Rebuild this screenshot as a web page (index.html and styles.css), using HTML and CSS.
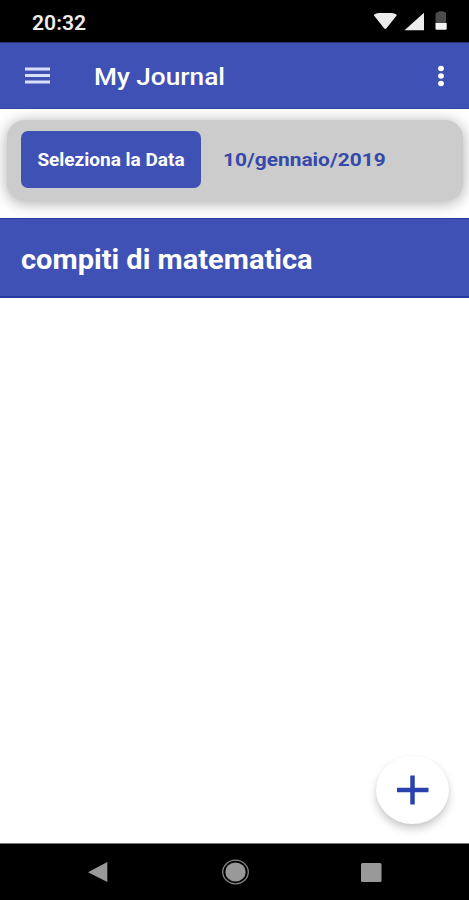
FILE: index.html
```html
<!DOCTYPE html>
<html lang="it">
<head>
<meta charset="utf-8">
<title>My Journal</title>
<link rel="stylesheet" href="styles.css">
</head>
<body>
<div class="screen">
  <div class="status-bar">
    <span class="clock">20:32</span>
    <svg class="status-icons" width="76" height="22" viewBox="0 0 76 22">
      <path d="M0.800 5.200Q2 3 6 2.900H18.500Q22.500 3 23.800 5.200L13.500 18.300Q12.300 19.700 11.100 18.300Z" fill="#ececec"/>
      <path d="M51 2.700V20.300H31.500Z" fill="#ececec"/>
      <path d="M63.500 2.800L66.500 1.300H70L73 2.800V13H62.500V3.800Z" fill="#4b4b4b"/>
      <path d="M62.500 13H73.700V18.500Q73.700 19.700 72.500 19.700H63.700Q62.500 19.700 62.500 18.500Z" fill="#f5f5f5"/>
    </svg>
  </div>
  <header class="app-bar">
    <svg class="menu-icon" width="25" height="17" viewBox="0 0 25 17">
      <path d="M0 2H25M0 8.500H25M0 15H25" stroke="#d9e0fa" stroke-width="2.800"/>
    </svg>
    <h1 class="title">My Journal</h1>
    <svg class="more-icon" width="7" height="22" viewBox="0 0 7 22">
      <g fill="#fff"><ellipse cx="3" cy="3.500" rx="2.900" ry="2.700"/><ellipse cx="3" cy="11" rx="2.900" ry="2.700"/><ellipse cx="3" cy="18.500" rx="2.900" ry="2.700"/></g>
    </svg>
  </header>
  <main class="content">
    <section class="date-area">
      <div class="date-card">
        <button class="date-button"><span class="button-label">Seleziona la Data</span></button>
        <span class="date">10/gennaio/2019</span>
      </div>
    </section>
    <div class="entry"><span class="entry-text">compiti di matematica</span></div>
    <button class="fab" aria-label="Aggiungi">
      <svg width="32" height="30" viewBox="0 0 32 30"><path d="M0 15H31.500M15.500 0.500V29.500" stroke="#2a41ae" stroke-width="4.500"/></svg>
    </button>
  </main>
  <nav class="nav-bar">
    <svg class="back" width="20" height="20" viewBox="0 0 20 20"><path d="M0 10.200L19.300 0V20Z" fill="#999"/></svg>
    <svg class="home" width="28" height="26" viewBox="0 0 28 26"><ellipse cx="13.500" cy="13" rx="12.800" ry="11.800" fill="none" stroke="#858585" stroke-width="1.300"/><ellipse cx="13.500" cy="13" rx="10.200" ry="9.400" fill="#999"/></svg>
    <svg class="recent" width="21" height="19" viewBox="0 0 21 19"><rect width="20.500" height="19" rx="1.500" fill="#999"/></svg>
  </nav>
</div>
</body>
</html>
```
FILE: styles.css
```css
* { box-sizing: border-box; }
body { margin: 0; font-family: Roboto, "Liberation Sans", sans-serif; }
button { border: 0; padding: 0; font: inherit; }
.screen { width: 469px; height: 900px; display: flex; flex-direction: column; background: #fff; overflow: hidden; }

.status-bar { height: 42px; flex: none; background: #000; display: flex; align-items: center; padding: 0 20px 0 31.500px; }
.clock { font-size: 20px; line-height: 24px; font-weight: 600; color: #ededed; margin-top: 4px; transform: scaleX(1.06); transform-origin: left; }
.status-icons { margin-left: auto; }

.app-bar { height: 67px; flex: none; background: #3f51b5; border-top: 1px solid #29367c; border-bottom: 1px solid #3045aa; display: flex; align-items: center; padding: 0 24px 0 24.500px; color: #fff; }
.title { margin: 3px 0 0 44.500px; font-size: 24.500px; line-height: 30px; font-weight: 500; transform: scaleX(1.07); transform-origin: left; }
.more-icon { margin-left: auto; }

.content { flex: 1; position: relative; }
.date-area { height: 109px; padding: 11px 6px 0 7px; overflow: hidden; }
.date-card { height: 81px; padding: 11px 14px 0; display: flex; align-items: flex-start; border-radius: 18px; background: #ccc; box-shadow: 0 2px 14px 1px rgba(0, 0, 0, .3); }
.date-button { width: 180px; height: 57px; flex: none; display: flex; align-items: center; justify-content: center; border-radius: 7px; background: #3f51b5; color: #fff; }
.button-label { font-size: 19px; font-weight: 700; white-space: nowrap; }
.date { margin-left: 22px; line-height: 57px; font-size: 19px; font-weight: 700; color: #3549aa; white-space: nowrap; transform: scaleX(1.1); transform-origin: left; }
.entry { height: 80px; display: flex; align-items: center; padding: 5px 21px 0; background: #3f51b5; border-top: 1px solid #263ba0; border-bottom: 2px solid #263ba0; color: #fff; }
.entry-text { font-size: 27px; font-weight: 700; white-space: nowrap; transform: scaleX(1.075); transform-origin: left; }

.fab { position: absolute; right: 20px; bottom: 19px; width: 73px; height: 68px; border-radius: 50%; background: #fff; display: flex; align-items: center; justify-content: center; box-shadow: 0 5px 9px rgba(0, 0, 0, .2), 0 1px 3px rgba(0, 0, 0, .05); }

.nav-bar { height: 57px; flex: none; background: #000; border-top: 1px solid #777; display: flex; align-items: center; padding-left: 88px; }
.home { margin-left: 114px; }
.recent { margin-left: 111px; }
```
